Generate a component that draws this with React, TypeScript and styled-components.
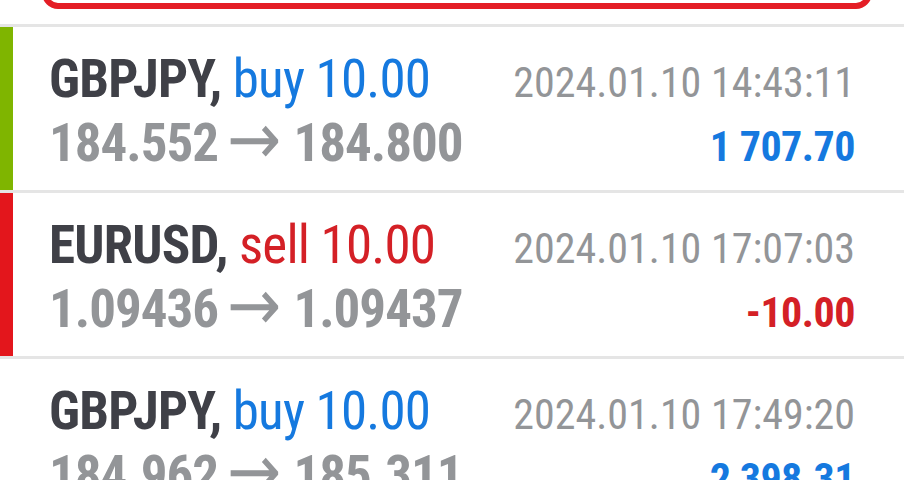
import React from 'react';
import styled, { createGlobalStyle } from 'styled-components';

const GlobalStyle = createGlobalStyle`
    html, body {
        margin: 0;
        padding: 0;
        background: #ffffff;
    }
    body {
        font-family: 'Roboto', 'Liberation Sans', sans-serif;
        font-stretch: 87.5%;
    }
`

const Page = styled.div`
    width: 904px;
    height: 480px;
    overflow: hidden;
    background: #ffffff;
`

const Header = styled.div`
    height: 24px;
    box-sizing: border-box;
    padding: 0 32px 15px 42px;
    display: flex;
    align-items: flex-end;
    overflow: hidden;
`

const FilterBox = styled.div`
    flex: 1;
    height: 48px;
    flex-shrink: 0;
    box-sizing: border-box;
    border: 6px solid #e41e26;
    border-radius: 16px;
`

const Row = styled.div`
    display: flex;
    border-top: 3px solid #e5e5e5;
`

const SideBar = styled.div<{ $color?: string }>`
    width: 13px;
    flex-shrink: 0;
    background: ${p => p.$color || 'transparent'};
`

const Content = styled.div`
    flex: 1;
    padding: 22px 49px 21px 36px;
`

const Line = styled.div`
    display: flex;
    justify-content: space-between;
    align-items: baseline;
    height: 60px;
    line-height: 60px;
    font-size: 53px;
    white-space: nowrap;
`

const Title = styled.span`
    letter-spacing: -0.8px;
`

const Symbol = styled.span`
    font-weight: 700;
    color: #3f4047;
`

const Deal = styled.span<{ $sell?: boolean }>`
    font-weight: 400;
    color: ${p => p.$sell ? '#d42026' : '#1579df'};
`

const Prices = styled.span`
    font-weight: 700;
    letter-spacing: -1px;
    color: #939598;
`

const Arrow = styled.span`
    font-family: 'DejaVu Sans', sans-serif;
    font-weight: 400;
    font-size: 72px;
    letter-spacing: 0;
    vertical-align: -3px;
    margin: 0 12px 0 9px;
`

const Time = styled.span`
    font-size: 42px;
    font-weight: 400;
    color: #939598;
`

const Profit = styled.span<{ $loss?: boolean }>`
    font-size: 42px;
    font-weight: 700;
    letter-spacing: -0.5px;
    color: ${p => p.$loss ? '#d42026' : '#1579df'};
`

type Trade = {
    symbol: string
    type: 'buy' | 'sell'
    volume: string
    open: string
    close: string
    time: string
    profit: string
    bar?: string
}

const trades: Trade[] = [
    { symbol: 'GBPJPY', type: 'buy', volume: '10.00', open: '184.552', close: '184.800', time: '2024.01.10 14:43:11', profit: '1 707.70', bar: '#7fb500' },
    { symbol: 'EURUSD', type: 'sell', volume: '10.00', open: '1.09436', close: '1.09437', time: '2024.01.10 17:07:03', profit: '-10.00', bar: '#e3161c' },
    { symbol: 'GBPJPY', type: 'buy', volume: '10.00', open: '184.962', close: '185.311', time: '2024.01.10 17:49:20', profit: '2 398.31' },
]

export default function App() {
    return (
        <Page>
            <GlobalStyle />
            <Header>
                <FilterBox />
            </Header>
            {trades.map((t, i) => (
                <Row key={i}>
                    <SideBar $color={t.bar} />
                    <Content>
                        <Line>
                            <Title>
                                <Symbol>{t.symbol},</Symbol>
                                <Deal $sell={t.type === 'sell'}> {t.type} {t.volume}</Deal>
                            </Title>
                            <Time>{t.time}</Time>
                        </Line>
                        <Line>
                            <Prices>{t.open}<Arrow>→</Arrow>{t.close}</Prices>
                            <Profit $loss={t.profit.startsWith('-')}>{t.profit}</Profit>
                        </Line>
                    </Content>
                </Row>
            ))}
        </Page>
    );
}
